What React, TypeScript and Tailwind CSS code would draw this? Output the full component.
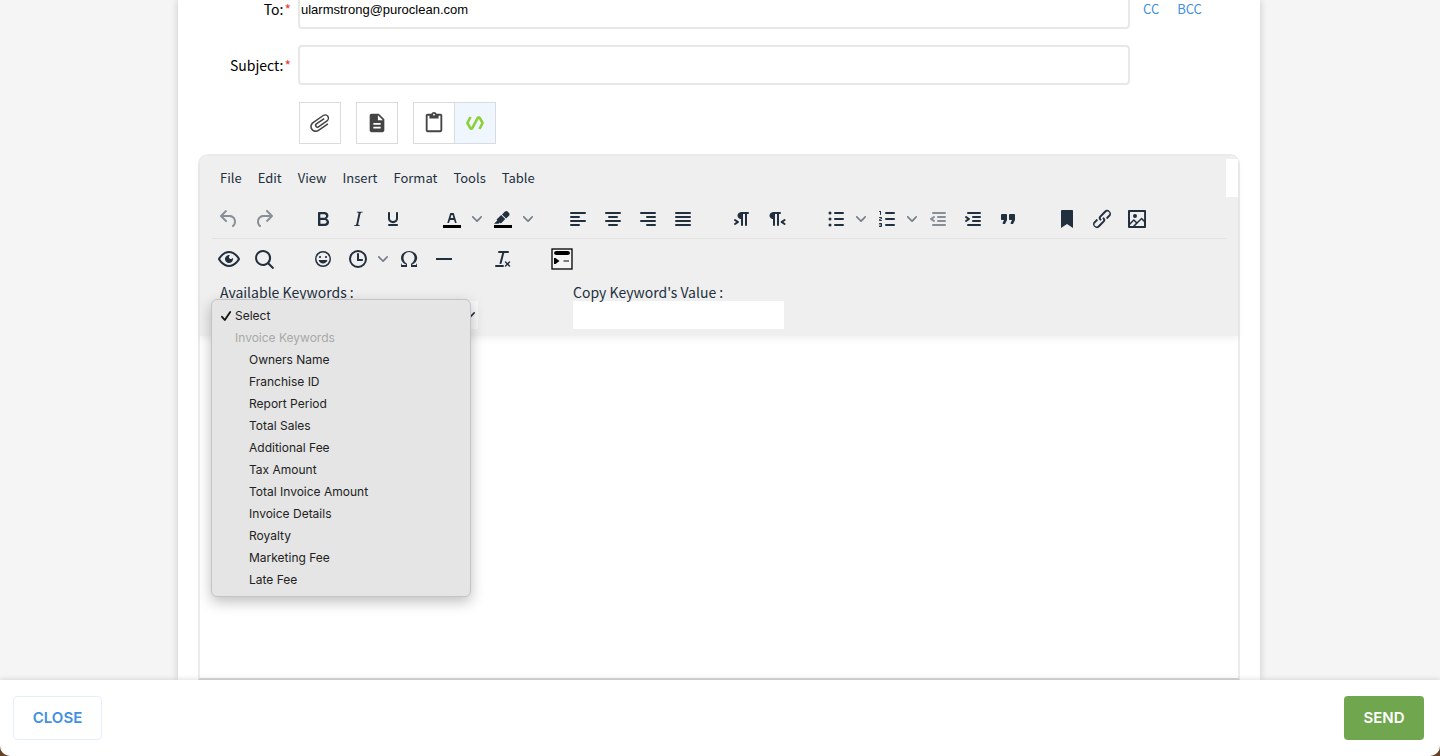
import { useState } from "react";
import type { ReactNode } from "react";
import { clsx } from "clsx";
import { MdAttachFile, MdContentPaste, MdDescription } from "react-icons/md";

type Tool = {
  name: string;
  icon: ReactNode;
  split?: boolean;
  disabled?: boolean;
};

const MENUS = ["File", "Edit", "View", "Insert", "Format", "Tools", "Table"];

const KEYWORDS = [
  "Owners Name",
  "Franchise ID",
  "Report Period",
  "Total Sales",
  "Additional Fee",
  "Tax Amount",
  "Total Invoice Amount",
  "Invoice Details",
  "Royalty",
  "Marketing Fee",
  "Late Fee",
];

function Lines({ d }: { d: string }) {
  return <path d={d} fill="none" stroke="currentColor" strokeWidth="2" strokeLinecap="round" />;
}

const MAIN_TOOLS: Tool[][] = [
  [
    {
      name: "Undo",
      disabled: true,
      icon: (
        <path d="M6.4 8H12c3.7 0 6.2 2 6.8 5.1.6 2.7-.4 5.6-2.3 6.8a1 1 0 0 1-1-1.8c1.1-.6 1.8-2.7 1.4-4.6-.5-2.1-2.1-3.5-4.9-3.5H6.4l3.3 3.3a1 1 0 1 1-1.4 1.4l-5-5a1 1 0 0 1 0-1.4l5-5a1 1 0 0 1 1.4 1.4L6.4 8Z" />
      ),
    },
    {
      name: "Redo",
      disabled: true,
      icon: (
        <path d="M17.6 10H12c-2.8 0-4.4 1.4-4.9 3.5-.4 2 .3 4 1.4 4.6a1 1 0 1 1-1 1.8c-2-1.2-2.9-4.1-2.3-6.8.6-3 3-5.1 6.8-5.1h5.6l-3.3-3.3a1 1 0 1 1 1.4-1.4l5 5a1 1 0 0 1 0 1.4l-5 5a1 1 0 0 1-1.4-1.4l3.3-3.3Z" />
      ),
    },
  ],
  [
    {
      name: "Bold",
      icon: (
        <path d="M7.8 19c-.3 0-.5 0-.6-.2l-.2-.5V5.7c0-.2 0-.4.2-.5l.6-.2h5c1.5 0 2.7.3 3.5 1 .7.6 1.1 1.4 1.1 2.5a3 3 0 0 1-.6 1.9c-.4.6-1 1-1.6 1.2.4.1.9.3 1.3.6s.8.7 1 1.2c.4.4.5 1 .5 1.6 0 1.3-.4 2.3-1.3 3-.8.7-2.1 1-3.8 1H7.8zm5-8.3c.6 0 1.2-.1 1.6-.5.4-.3.6-.7.6-1.3 0-1.1-.8-1.7-2.3-1.7H9.3v3.5h3.4zm.5 6c.7 0 1.3-.1 1.7-.4.4-.4.6-.9.6-1.5s-.2-1-.7-1.4c-.4-.3-1-.4-2-.4H9.4v3.8h4z" />
      ),
    },
    {
      name: "Italic",
      icon: (
        <path d="m16.7 4.7-.1.9h-.3c-.6 0-1 0-1.4.3-.3.3-.4.6-.5 1.1l-2.1 9.8v.6c0 .5.4.8 1.4.8h.2l-.2.8H8l.2-.8h.2c1.1 0 1.8-.5 2-1.5l2-9.8.1-.5c0-.6-.4-.8-1.4-.8h-.3l.2-.9h5.8z" />
      ),
    },
    {
      name: "Underline",
      icon: (
        <path d="M16 5c.6 0 1 .4 1 1v5.5a4 4 0 0 1-.4 1.8l-1 1.4a5.3 5.3 0 0 1-5.5 1 5 5 0 0 1-1.6-1c-.5-.4-.8-.9-1.1-1.4a4 4 0 0 1-.4-1.8V6c0-.6.4-1 1-1s1 .4 1 1v5.5c0 .3 0 .6.2 1l.6.7a3.3 3.3 0 0 0 2.2.8 3.4 3.4 0 0 0 2.2-.8c.3-.2.4-.5.6-.8l.2-.9V6c0-.6.4-1 1-1zM8 17h8c.6 0 1 .4 1 1s-.4 1-1 1H8a1 1 0 0 1 0-2z" />
      ),
    },
  ],
  [
    {
      name: "Text color",
      split: true,
      icon: (
        <>
          <path d="M3 18h18v3H3z" fill="#000" />
          <path d="M8.7 16h-.8a.5.5 0 0 1-.5-.6l2.7-9c.1-.3.3-.4.5-.4h2.8c.2 0 .4.1.5.4l2.7 9a.5.5 0 0 1-.5.6h-.8a.5.5 0 0 1-.4-.4l-.7-2.2c0-.3-.3-.4-.5-.4h-3.4c-.2 0-.4.1-.5.4l-.7 2.2c0 .3-.2.4-.4.4zm2.6-7.6-.6 2a.5.5 0 0 0 .5.6h1.6a.5.5 0 0 0 .5-.6l-.6-2c0-.3-.3-.4-.5-.4h-.4c-.2 0-.4.1-.5.4z" />
        </>
      ),
    },
    {
      name: "Background color",
      split: true,
      icon: (
        <>
          <path d="M3 18h18v3H3z" fill="#000" />
          <path d="M7.7 16.7H3l3.3-3.3-.7-.8L10.2 8l4 4.1-4 4.2c-.2.2-.6.2-.8 0l-.6-.7-1.1 1.1zm5-7.5L11 7.4l3-2.9a2 2 0 0 1 2.6 0L18 6c.7.7.7 2 0 2.7l-2.9 2.9-1.8-1.8-.5-.6" />
        </>
      ),
    },
  ],
  [
    { name: "Align left", icon: <Lines d="M5 6h14M5 10h8M5 14h14M5 18h8" /> },
    { name: "Align center", icon: <Lines d="M5 6h14M8 10h8M5 14h14M8 18h8" /> },
    { name: "Align right", icon: <Lines d="M5 6h14M11 10h8M5 14h14M11 18h8" /> },
    { name: "Justify", icon: <Lines d="M5 6h14M5 10h14M5 14h14M5 18h14" /> },
  ],
  [
    {
      name: "Left to right",
      icon: (
        <path d="M11 5h7a1 1 0 0 1 0 2h-1v11a1 1 0 0 1-2 0V7h-2v11a1 1 0 0 1-2 0v-6c-.5 0-1 0-1.4-.3A3.4 3.4 0 0 1 7.8 10a3.3 3.3 0 0 1 0-2.8 3.4 3.4 0 0 1 1.8-1.8L11 5zM4.4 16.2 6.2 15l-1.8-1.2a1 1 0 0 1 1.2-1.6l3 2a1 1 0 0 1 0 1.6l-3 2a1 1 0 1 1-1.2-1.6z" />
      ),
    },
    {
      name: "Right to left",
      icon: (
        <path d="M8 5h7a1 1 0 0 1 0 2h-1v11a1 1 0 0 1-2 0V7h-2v11a1 1 0 0 1-2 0v-6c-.5 0-1 0-1.4-.3A3.4 3.4 0 0 1 4.8 10a3.3 3.3 0 0 1 0-2.8 3.4 3.4 0 0 1 1.8-1.8L8 5zm12.2 11.2a1 1 0 1 1-1.2 1.6l-3-2a1 1 0 0 1 0-1.6l3-2a1 1 0 1 1 1.2 1.6L18.4 15l1.8 1.2z" />
      ),
    },
  ],
  [
    {
      name: "Bullet list",
      split: true,
      icon: (
        <>
          <Lines d="M11 6h8M11 12h8M11 18h8" />
          <circle cx="6" cy="6" r="1.5" />
          <circle cx="6" cy="12" r="1.5" />
          <circle cx="6" cy="18" r="1.5" />
        </>
      ),
    },
    {
      name: "Numbered list",
      split: true,
      icon: (
        <>
          <Lines d="M11 6h8M11 12h8M11 18h8" />
          <path d="M6 4v3.5c0 .3-.2.5-.5.5a.5.5 0 0 1-.5-.5V5h-.5a.5.5 0 0 1 0-1H6zm-1 8.8.2.2h1.3c.3 0 .5.2.5.5s-.2.5-.5.5H4.9a1 1 0 0 1-.9-1V13c0-.4.3-.8.6-1l1.2-.4.2-.3a.2.2 0 0 0-.2-.2H4.5a.5.5 0 0 1-.5-.5c0-.3.2-.5.5-.5h1.6c.5 0 .9.4.9 1v.1c0 .4-.3.8-.6 1l-1.2.4-.2.3zM7 17v2c0 .6-.4 1-1 1H4.5a.5.5 0 0 1 0-1h1.2c.2 0 .3-.1.3-.3 0-.2-.1-.3-.3-.3H4.4a.4.4 0 1 1 0-.8h1.3c.2 0 .3-.1.3-.3 0-.2-.1-.3-.3-.3H4.5a.5.5 0 1 1 0-1H6c.6 0 1 .4 1 1z" />
        </>
      ),
    },
    {
      name: "Decrease indent",
      disabled: true,
      icon: (
        <>
          <Lines d="M7 6h12M12 10h7M12 14h7M7 18h12" />
          <path d="M8.6 13.2a1 1 0 0 1-1.2 1.6l-3-2a1 1 0 0 1 0-1.6l3-2a1 1 0 0 1 1.2 1.6L6.8 12l1.8 1.2z" />
        </>
      ),
    },
    {
      name: "Increase indent",
      icon: (
        <>
          <Lines d="M7 6h12M12 10h7M12 14h7M7 18h12" />
          <path d="M4.4 13.2 6.2 12l-1.8-1.2a1 1 0 0 1 1.2-1.6l3 2a1 1 0 0 1 0 1.6l-3 2a1 1 0 1 1-1.2-1.6z" />
        </>
      ),
    },
    {
      name: "Blockquote",
      icon: (
        <path d="M7.5 17h.9c.4 0 .7-.2.9-.6L11 13V8c0-.6-.4-1-1-1H6a1 1 0 0 0-1 1v4c0 .6.4 1 1 1h2l-1.3 2.7a1 1 0 0 0 .8 1.3zm8 0h.9c.4 0 .7-.2.9-.6L19 13V8c0-.6-.4-1-1-1h-4a1 1 0 0 0-1 1v4c0 .6.4 1 1 1h2l-1.3 2.7a1 1 0 0 0 .8 1.3z" />
      ),
    },
  ],
  [
    { name: "Anchor", icon: <path d="M6 4v17l6-4 6 4V4c0-.6-.4-1-1-1H7a1 1 0 0 0-1 1z" /> },
    {
      name: "Link",
      icon: (
        <path d="M6.2 12.3a1 1 0 0 1 1.4 1.4l-2 2a2 2 0 1 0 2.6 2.8l4.8-4.8a1 1 0 0 0 0-1.4 1 1 0 1 1 1.4-1.3 2.9 2.9 0 0 1 0 4L9.6 20a3.9 3.9 0 0 1-5.5-5.5l2-2zm11.6-.6a1 1 0 0 1-1.4-1.4l2-2a2 2 0 1 0-2.6-2.8L11 10.3a1 1 0 0 0 0 1.4A1 1 0 1 1 9.6 13a2.9 2.9 0 0 1 0-4L14.4 4a3.9 3.9 0 0 1 5.5 5.5l-2 2z" />
      ),
    },
    {
      name: "Image",
      icon: (
        <path d="m5 15.7 3.3-3.2c.3-.3.7-.3 1 0L12 15l4.1-4c.3-.4.8-.4 1 0l2 1.9V5H5v10.7zM5 18V19h3l2.8-2.9-2-2L5 17.9zm14-3-2.5-2.4-6.4 6.5H19v-4zM4 3h16c.6 0 1 .4 1 1v16c0 .6-.4 1-1 1H4a1 1 0 0 1-1-1V4c0-.6.4-1 1-1zm6 8a2 2 0 1 0 0-4 2 2 0 0 0 0 4z" />
      ),
    },
  ],
];

const EXTRA_TOOLS: Tool[][] = [
  [
    {
      name: "Preview",
      icon: (
        <path d="M3.5 12.5c.5.8 1.1 1.6 1.8 2.3 2 2 4.2 3.2 6.7 3.2s4.7-1.2 6.7-3.2a16.2 16.2 0 0 0 2.1-2.8 15.7 15.7 0 0 0-2.1-2.8c-2-2-4.2-3.2-6.7-3.2a9.3 9.3 0 0 0-6.7 3.2A16.2 16.2 0 0 0 3.2 12c0 .2.2.3.3.5zm-2.4-1 .7-1.2L4 7.8C6.2 5.4 8.9 4 12 4c3 0 5.8 1.4 8.1 3.8a18.2 18.2 0 0 1 2.8 3.7v1l-.7 1.2-2.1 2.5c-2.3 2.4-5 3.8-8.1 3.8-3 0-5.8-1.4-8.1-3.8a18.2 18.2 0 0 1-2.8-3.7 1 1 0 0 1 0-1zm12-3.3a2 2 0 1 0 2.7 2.6 4 4 0 1 1-2.6-2.6z" />
      ),
    },
    {
      name: "Find and replace",
      icon: (
        <path d="M16 17.3a8 8 0 1 1 1.4-1.4l4.3 4.4a1 1 0 0 1-1.4 1.4l-4.4-4.3zm-5-.3a6 6 0 1 0 0-12 6 6 0 0 0 0 12z" />
      ),
    },
  ],
  [
    {
      name: "Emojis",
      icon: (
        <path d="M9 11c.6 0 1-.4 1-1s-.4-1-1-1a1 1 0 0 0-1 1c0 .6.4 1 1 1zm6 0c.6 0 1-.4 1-1s-.4-1-1-1a1 1 0 0 0-1 1c0 .6.4 1 1 1zm-3 5.5c2.1 0 4-1.5 4.4-3.5H7.6c.5 2 2.3 3.5 4.4 3.5zM12 4a8 8 0 1 0 0 16 8 8 0 0 0 0-16zm0 14.5a6.5 6.5 0 1 1 0-13 6.5 6.5 0 0 1 0 13z" />
      ),
    },
    {
      name: "Insert date/time",
      split: true,
      icon: (
        <path d="M12 19a7 7 0 1 0 0-14 7 7 0 0 0 0 14zm0 2a9 9 0 1 1 0-18 9 9 0 0 1 0 18zM16 12h-3V7c0-.5-.4-1-1-1a1 1 0 0 0-1 1v7h5c.6 0 1-.4 1-1s-.4-1-1-1z" />
      ),
    },
    {
      name: "Special character",
      icon: (
        <path d="M15 18h4l1-2v4h-6v-3.3l1.4-1a6 6 0 0 0 1.8-2.9 6.3 6.3 0 0 0-.1-4.1 5.8 5.8 0 0 0-3-3.2c-.6-.3-1.3-.5-2.1-.5a5.1 5.1 0 0 0-3.9 1.8 6.3 6.3 0 0 0-1.3 6 6.2 6.2 0 0 0 1.8 3l1.4.9V20H4v-4l1 2h4v-.5l-2-1L5.4 15A6.5 6.5 0 0 1 4 11c0-1 .2-1.9.6-2.7A7 7 0 0 1 6.3 6C7.1 5.4 8 5 9 4.5c1-.3 2-.5 3.1-.5a8.8 8.8 0 0 1 5.7 2 7 7 0 0 1 1.7 2.3 6 6 0 0 1 .2 4.8c-.2.7-.6 1.3-1 1.9a7.6 7.6 0 0 1-3.6 2.5v.5z" />
      ),
    },
    { name: "Horizontal line", icon: <path d="M4 11h16v2H4z" /> },
  ],
  [
    {
      name: "Clear formatting",
      icon: (
        <path d="M13.2 6a1 1 0 0 1 0 .2l-2.6 10a1 1 0 0 1-1 .8h-.2a.8.8 0 0 1-.8-1l2.6-10H8a1 1 0 1 1 0-2h9a1 1 0 0 1 0 2h-3.8zM5 18h7a1 1 0 0 1 0 2H5a1 1 0 0 1 0-2zm13 1.5L16.5 18 15 19.5a.7.7 0 0 1-1-1l1.5-1.5-1.5-1.5a.7.7 0 0 1 1-1l1.5 1.5 1.5-1.5a.7.7 0 0 1 1 1L17.5 17l1.5 1.5a.7.7 0 0 1-1 1z" />
      ),
    },
  ],
  [
    {
      name: "Insert button",
      icon: (
        <g fill="#000">
          <rect x="2" y="2" width="20" height="20" fill="#f4f4f4" stroke="#000" strokeWidth="1.3" />
          <rect x="4" y="4" width="16" height="4" rx="2.5" ry="2" />
          <path d="M4 11h1.5l4 3-4 3H4z" />
          <path d="M13.5 13.500h5.5v1h-5.5z" />
        </g>
      ),
    },
  ],
];

function Chevron({ className }: { className?: string }) {
  return (
    <svg viewBox="0 0 10 10" className={clsx("size-[10px]", className)} fill="currentColor" aria-hidden="true">
      <path d="M8.7 2.2c.3-.3.8-.3 1 0 .4.4.4.9 0 1.2L5.7 7.8c-.3.3-.9.3-1.2 0L.2 3.4a.8.8 0 0 1 0-1.2c.3-.3.8-.3 1.1 0L5 6l3.7-3.8z" />
    </svg>
  );
}

function ToolButton({ tool }: { tool: Tool }) {
  return (
    <div className="mr-px flex">
      <button
        type="button"
        aria-label={tool.name}
        disabled={tool.disabled}
        className={clsx(
          "grid h-7 w-[34px] place-items-center",
          tool.disabled ? "text-[#222f3e]/50" : "text-[#222f3e]"
        )}
      >
        <svg viewBox="0 0 24 24" className="size-6" fill="currentColor" fillRule="evenodd" aria-hidden="true">
          {tool.icon}
        </svg>
      </button>
      {tool.split && (
        <button
          type="button"
          aria-label={`${tool.name} options`}
          className="grid h-7 w-4 place-items-center text-[#222f3e]/60"
        >
          <Chevron />
        </button>
      )}
    </div>
  );
}

function Toolbar({ groups }: { groups: Tool[][] }) {
  return (
    <div className="flex h-[39px] items-center gap-6">
      {groups.map((group) => (
        <div key={group[0].name} className="flex">
          {group.map((tool) => (
            <ToolButton key={tool.name} tool={tool} />
          ))}
        </div>
      ))}
    </div>
  );
}

function FieldLabel({ htmlFor, children }: { htmlFor: string; children: string }) {
  return (
    <label htmlFor={htmlFor} className="pr-[7px] text-right text-sm text-black">
      {children}
      <span className="ml-px text-[#e53e2f]">*</span>
    </label>
  );
}

const inputClass = "h-10 w-full rounded border-2 border-[#e8e8e8] bg-white px-px text-black outline-none";
const attachBtn = "grid size-[42px] place-items-center border border-[#d9dcdf] text-[#444]";

function KeywordMenu({ value, onPick }: { value: string; onPick: (v: string) => void }) {
  return (
    <ul
      role="listbox"
      aria-label="Available Keywords"
      className="absolute -left-[9px] -top-0.5 z-10 w-[260px] rounded-md border border-[#c4c4c4] bg-[#e5e5e5] py-[5px] font-['Inter',sans-serif] text-xs leading-[22px] text-[#222] shadow-[0_5px_14px_rgba(0,0,0,0.25)]"
    >
      <li role="option" aria-selected={value === ""} className="flex items-center pl-2" onClick={() => onPick("")}>
        <svg viewBox="0 0 12 12" className="mr-[3px] size-3" fill="none" stroke="#111" strokeWidth="1.8" aria-hidden="true">
          <path d="M2 6.800l2.800 3.200L10.200 2" strokeLinecap="round" strokeLinejoin="round" />
        </svg>
        Select
      </li>
      <li className="pl-[23px] text-[#a9a9a9]">Invoice Keywords</li>
      {KEYWORDS.map((k) => (
        <li key={k} role="option" aria-selected={value === k} className="pl-[37px]" onClick={() => onPick(k)}>
          {k}
        </li>
      ))}
    </ul>
  );
}

export default function App() {
  const [to, setTo] = useState("ularmstrong@puroclean.com");
  const [subject, setSubject] = useState("");
  const [keyword, setKeyword] = useState("");

  return (
    <div className="flex h-screen flex-col bg-[#6b4325] font-['Noto_Sans_CJK_SC',sans-serif]">
      <main className="flex min-h-0 flex-1 overflow-hidden bg-[#f5f5f5] pl-[178px] pr-[180px]">
        <div className="flex min-w-0 flex-1 flex-col bg-white shadow-[0_0_8px_rgba(0,0,0,0.18)]">
          <form className="-mt-[11px] grid grid-cols-[120px_1fr_130px] items-center gap-y-4">
            <FieldLabel htmlFor="to">To:</FieldLabel>
            <input
              id="to"
              className={`${inputClass} font-['Liberation_Sans',sans-serif] text-[13px]`}
              value={to}
              onChange={(e) => setTo(e.target.value)}
            />
            <div className="flex gap-[18px] pl-[13px] text-[13px] text-[#3f8fe3]">
              <a href="#cc">CC</a>
              <a href="#bcc">BCC</a>
            </div>
            <FieldLabel htmlFor="subject">Subject:</FieldLabel>
            <input
              id="subject"
              className={`${inputClass} text-[13px]`}
              value={subject}
              onChange={(e) => setSubject(e.target.value)}
            />
          </form>

          <div className="ml-[120px] mt-[17px] flex gap-[15px] pl-px">
            <button type="button" aria-label="Attach file" className={attachBtn}>
              <MdAttachFile className="size-6 rotate-[55deg]" />
            </button>
            <button type="button" aria-label="Insert document" className={attachBtn}>
              <MdDescription className="size-[22px]" />
            </button>
            <div className="flex">
              <button type="button" aria-label="Paste template" className={attachBtn}>
                <MdContentPaste className="size-[22px]" />
              </button>
              <button
                type="button"
                aria-label="Keywords"
                className="-ml-px grid size-[42px] place-items-center border border-[#d9dcdf] bg-[#f0f6fd]"
              >
                <svg viewBox="0 0 20 16" className="h-4 w-5" fill="none" stroke="#8bd136" strokeWidth="2.6" aria-hidden="true">
                  <path
                    d="M5.500 2L2.400 8l2.700 4.800q1.200 1.900 2.300 0L12.600 3.200q1.100-1.900 2.300 0L17.600 8l-3.100 6"
                    strokeLinejoin="round"
                  />
                </svg>
              </button>
            </div>
          </div>

          <section className="mx-5 mt-[10px] flex min-h-0 flex-1 flex-col rounded-t-[10px] border-2 border-[#ececec] border-b-[#d9d9d9]">
            <header className="rounded-t-lg bg-[#efefef] pb-[7px] pt-[3px] shadow-[0_3px_6px_rgba(0,0,0,0.06)]">
              <div className="flex h-[38px] items-center justify-between">
                <nav className="flex gap-4 pl-5 text-[13px] text-[#222f3e]">
                  {MENUS.map((m) => (
                    <button key={m} type="button">
                      {m}
                    </button>
                  ))}
                </nav>
                <div className="h-full w-3 bg-white" />
              </div>
              <div className="mx-3 mt-[2px] border-b border-[#e2e2e2]">
                <Toolbar groups={MAIN_TOOLS} />
              </div>
              <div className="ml-3">
                <Toolbar groups={EXTRA_TOOLS} />
              </div>
              <div className="flex gap-[95px] pl-5 pt-[5px] text-sm text-[#222f3e]">
                <div className="w-[258px]">
                  <label htmlFor="keywords" className="block h-[18px] leading-[18px]">
                    Available Keywords :
                  </label>
                  <div className="relative">
                    <select
                      id="keywords"
                      className="block h-7 w-full appearance-none bg-[#f8f8f8] px-1 outline-none"
                      value={keyword}
                      onChange={(e) => setKeyword(e.target.value)}
                    >
                      <option value="">Select</option>
                      <optgroup label="Invoice Keywords">
                        {KEYWORDS.map((k) => (
                          <option key={k}>{k}</option>
                        ))}
                      </optgroup>
                    </select>
                    <Chevron className="pointer-events-none absolute right-[3px] top-[9px]" />
                    <KeywordMenu value={keyword} onPick={setKeyword} />
                  </div>
                </div>
                <div className="w-[211px]">
                  <label htmlFor="keyword-value" className="block h-[18px] leading-[18px]">
                    Copy Keyword's Value :
                  </label>
                  <input
                    id="keyword-value"
                    readOnly
                    className="block h-7 w-full bg-white px-1 outline-none"
                    value={keyword && `{{${keyword}}}`}
                  />
                </div>
              </div>
            </header>
            <div className="flex-1" />
          </section>
        </div>
      </main>

      <footer className="z-20 flex h-[76px] shrink-0 items-center justify-between rounded-b-[10px] bg-white pl-[13px] pr-4 font-['Inter',sans-serif] text-[15px] font-semibold shadow-[0_-1px_5px_rgba(0,0,0,0.12)]">
        <button type="button" className="h-11 w-[89px] rounded border border-[#e6edfb] text-[#3f8fe3]">
          CLOSE
        </button>
        <button type="button" className="h-11 w-20 rounded bg-[#70a64e] text-white">
          SEND
        </button>
      </footer>
    </div>
  );
}
